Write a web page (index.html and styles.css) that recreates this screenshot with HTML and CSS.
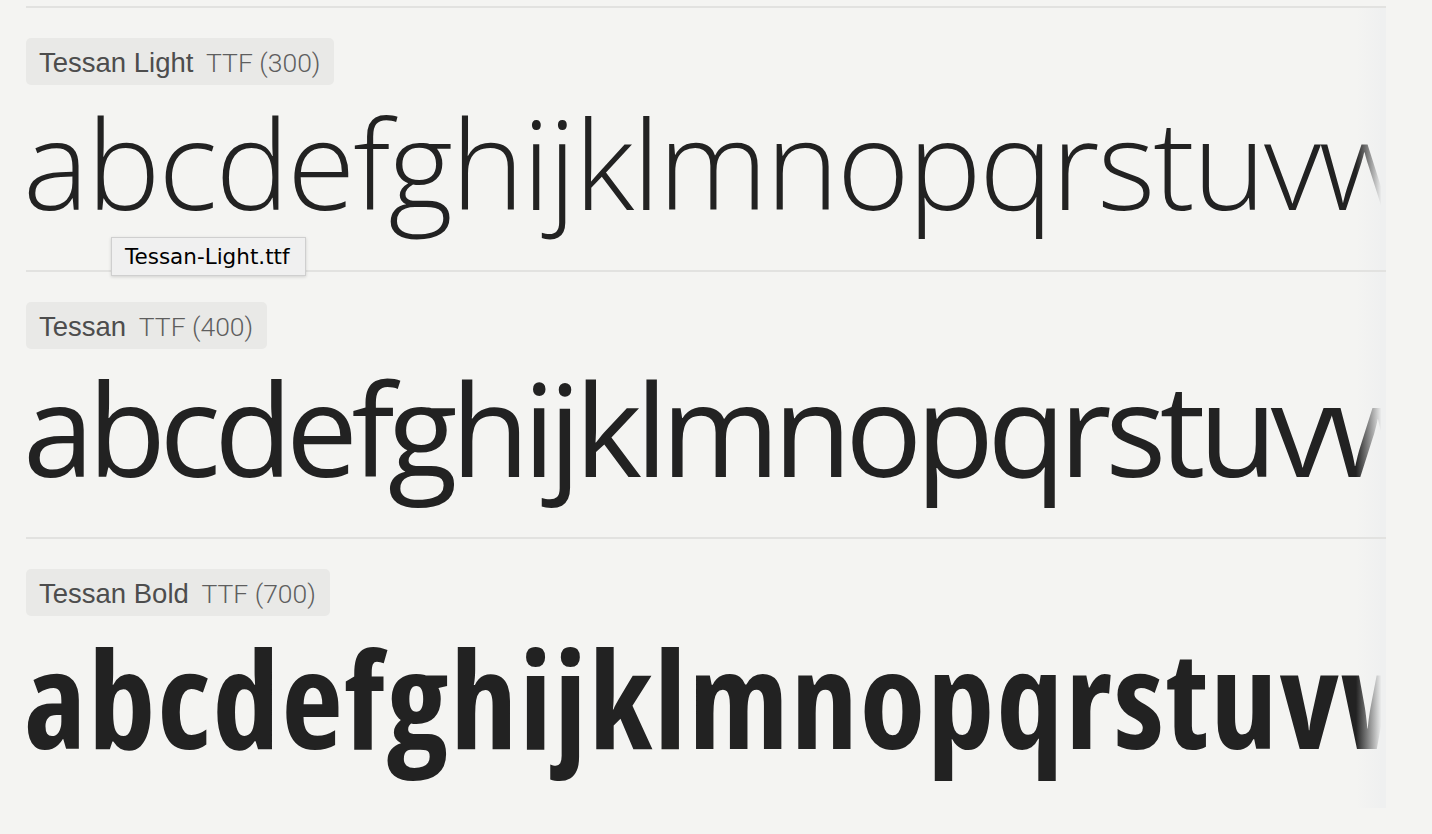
FILE: index.html
```html
<!DOCTYPE html>
<html lang="en">
<head>
    <meta charset="UTF-8">
    <meta name="viewport" content="width=device-width, initial-scale=1.0">
    <title>Tessan Specimen</title>
    <link rel="stylesheet" href="styles.css">
</head>
<body>
    <div class="specimens">
        <hr class="rule">
        <section class="face face-light">
            <div class="face-label">Tessan Light <span class="face-format">TTF (300)</span></div>
            <div class="sample">abcdefghijklmnopqrstuvwxyz</div>
            <div class="tooltip">Tessan-Light.ttf</div>
        </section>

        <hr class="rule">
        <section class="face face-regular">
            <div class="face-label">Tessan <span class="face-format">TTF (400)</span></div>
            <div class="sample">abcdefghijklmnopqrstuvwxyz</div>
        </section>

        <hr class="rule">
        <section class="face face-bold">
            <div class="face-label">Tessan Bold <span class="face-format">TTF (700)</span></div>
            <div class="sample">abcdefghijklmnopqrstuvwxyz</div>
        </section>
    </div>
</body>
</html>
```

FILE: styles.css
```css
* {
    box-sizing: border-box;
}

body {
    margin: 0;
    background-color: #f4f4f2;
    font-family: 'Liberation Sans', Arial, sans-serif;
}

.specimens {
    position: relative;
    width: 1360px;
    margin: 6px 0 0 26px;
    overflow: hidden;
}

/* soft fade on the right edge where the samples run out */
.specimens::after {
    content: '';
    position: absolute;
    top: 2px;
    right: 0;
    bottom: 0;
    width: 30px;
    background: linear-gradient(to right, rgba(240, 241, 241, 0), #eff0f0 85%);
    z-index: 1;
}

.rule {
    position: relative;
    z-index: 2;
    height: 2px;
    margin: 0;
    border: none;
    background-color: #e2e2e0;
}

.face {
    position: relative;
    padding-top: 30px;
}

.face-label {
    display: inline-block;
    height: 47px;
    padding: 2px 14px 0 13px;
    line-height: 45px;
    font-size: 27.5px;
    color: #4d4d4d;
    background-color: #e9e9e7;
    border-radius: 5px;
}

.face-format {
    margin-left: 5px;
    font-family: 'Roboto', sans-serif;
    font-size: 26.5px;
    font-weight: 300;
    color: #5e5e5e;
}

.sample {
    margin-left: -3px;
    white-space: nowrap;
    font-family: 'Open Sans', sans-serif;
    color: #222222;
}

.face-light {
    padding-bottom: 31px;
}

.face-light .sample {
    font-size: 124px;
    font-weight: 300;
    line-height: 154px;
    letter-spacing: -2px;
}

.face-regular {
    padding-bottom: 31px;
}

.face-regular .sample {
    font-size: 128px;
    font-weight: 400;
    line-height: 157px;
    letter-spacing: -6.5px;
}

.face-bold {
    padding-bottom: 29px;
}

.face-bold .sample {
    margin-left: -2px;
    font-size: 134px;
    font-weight: 700;
    font-stretch: 87%;
    line-height: 163px;
    letter-spacing: 2px;
}

.tooltip {
    position: absolute;
    top: 229px;
    left: 85px;
    width: 195px;
    height: 39px;
    padding-left: 13px;
    line-height: 38px;
    font-family: 'DejaVu Sans', sans-serif;
    font-size: 21.5px;
    color: #000000;
    background-color: #f0f0f0;
    border: 1px solid #cfcfcf;
    box-shadow: 0 1px 3px #00000026;
    z-index: 3;
}
```
